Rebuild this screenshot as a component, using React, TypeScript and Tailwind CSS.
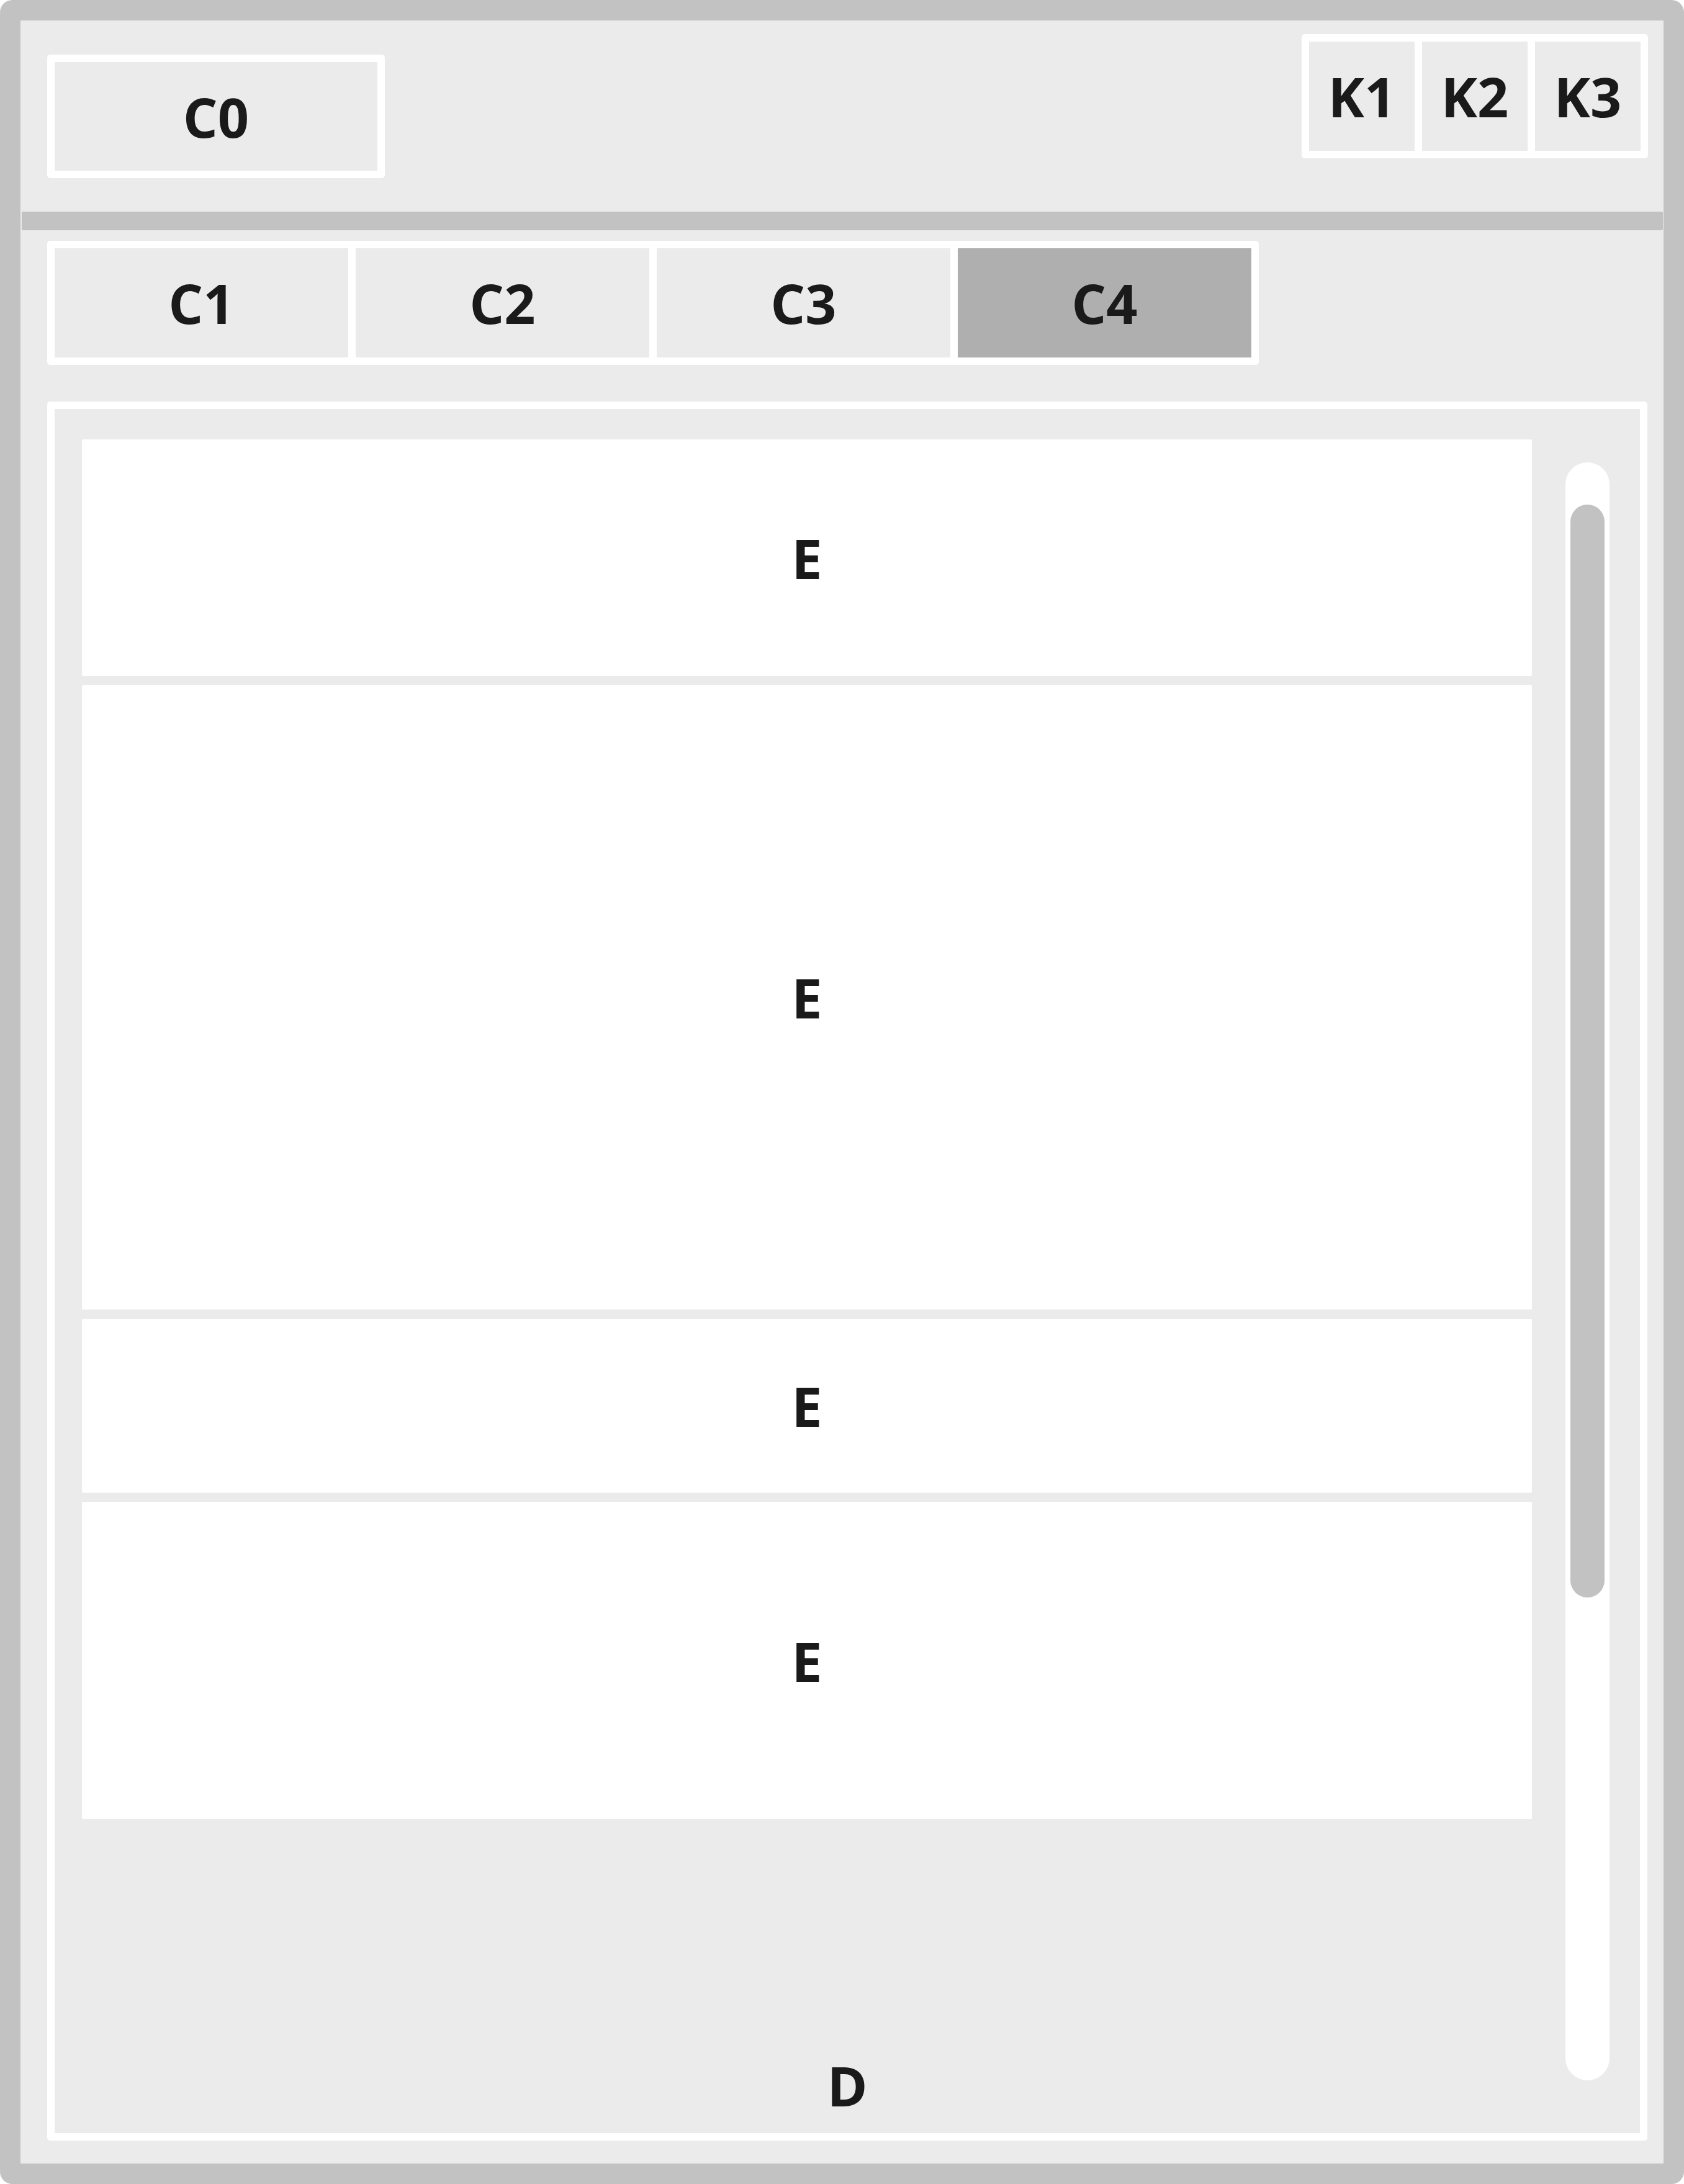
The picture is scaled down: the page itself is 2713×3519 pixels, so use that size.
import React from "react";

const font = { fontFamily: '"Open Sans", "Noto Sans", sans-serif' };

function Label({ children }: { children: React.ReactNode }) {
  return (
    <span className="text-[88px] font-bold leading-none text-[#1a1a1a]" style={font}>
      {children}
    </span>
  );
}

export default function App() {
  const cards = [381, 1006, 280, 511];
  return (
    <div className="w-[2713px] h-[3519px] bg-[#c2c2c2] rounded-[20px] p-[33px]" style={font}>
      <div className="w-full h-full bg-[#ebebeb] flex flex-col">
        {/* header */}
        <div className="h-[308px] flex justify-between items-start">
          <div className="ml-[43px] mt-[55px] w-[544px] h-[199px] border-[12px] border-white rounded-[5px] flex items-center justify-center">
            <Label>C0</Label>
          </div>
          <div className="mr-[25px] mt-[22px] flex gap-[12px] bg-white border-[12px] border-white rounded-[5px]">
            {["K1", "K2", "K3"].map((k) => (
              <div key={k} className="w-[170px] h-[176px] bg-[#ebebeb] flex items-center justify-center">
                <Label>{k}</Label>
              </div>
            ))}
          </div>
        </div>
        {/* divider */}
        <div className="h-[30px] ml-[2px] mr-[1px] bg-[#c2c2c2] rounded-[2px]" />
        {/* tabs */}
        <div className="mt-[17px] ml-[43px] self-start flex gap-[12px] bg-white border-[12px] border-white rounded-[5px]">
          {["C1", "C2", "C3", "C4"].map((c, i) => (
            <div
              key={c}
              className={`w-[473px] h-[176px] flex items-center justify-center ${i === 3 ? "bg-[#afafaf]" : "bg-[#ebebeb]"}`}
            >
              <Label>{c}</Label>
            </div>
          ))}
        </div>
        {/* content panel */}
        <div className="relative mt-[59px] mb-[37px] ml-[43px] mr-[26px] flex-1 border-[12px] border-white rounded-[5px] flex">
          <div className="pt-[49px] pl-[44px] w-[2380px] flex flex-col gap-[15px]">
            {cards.map((h, i) => (
              <div
                key={i}
                className="w-[2336px] bg-white rounded-[2px] flex items-center justify-center"
                style={{ height: h }}
              >
                <Label>E</Label>
              </div>
            ))}
          </div>
          <div className="ml-[54px] mt-[86px] mb-[85px] w-[71px] bg-white rounded-full pt-[68px] flex justify-center">
            <div className="w-[55px] h-[1761px] bg-[#c2c2c2] rounded-full" />
          </div>
          <div className="absolute left-0 right-0 bottom-[33px] flex justify-center">
            <Label>D</Label>
          </div>
        </div>
      </div>
    </div>
  );
}
